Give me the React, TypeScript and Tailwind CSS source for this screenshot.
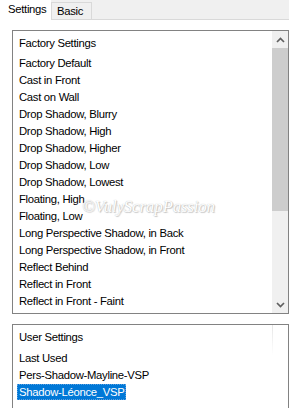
import React from "react";

const factory = [
  "Factory Default",
  "Cast in Front",
  "Cast on Wall",
  "Drop Shadow, Blurry",
  "Drop Shadow, High",
  "Drop Shadow, Higher",
  "Drop Shadow, Low",
  "Drop Shadow, Lowest",
  "Floating, High",
  "Floating, Low",
  "Long Perspective Shadow, in Back",
  "Long Perspective Shadow, in Front",
  "Reflect Behind",
  "Reflect in Front",
  "Reflect in Front - Faint",
];

const user = ["Last Used", "Pers-Shadow-Mayline-VSP", "Shadow-Léonce_VSP"];

function Chevron({ up }: { up?: boolean }) {
  return (
    <svg width="9" height="6" viewBox="0 0 9 6">
      <polyline
        points={up ? "1,5 4.5,1.5 8,5" : "1,1 4.5,4.5 8,1"}
        fill="none"
        stroke="#606060"
        strokeWidth="1.7"
      />
    </svg>
  );
}

export default function App() {
  return (
    <div className="relative w-[289px] h-[408px] overflow-hidden bg-white text-[11.3px] tracking-[-0.3px] text-black font-['Liberation_Sans',Arial,sans-serif]">
      {/* Tabs */}
      <div className="flex h-[20px] items-end border-b border-[#d9d9d9] bg-[#f0f0f0]">
        <div className="relative z-10 -mb-px flex h-[21px] w-[51px] items-center bg-white pl-[8px] pb-[1px]">
          Settings
        </div>
        <div className="flex h-[17px] w-[41px] items-center border border-b-0 border-[#d9d9d9] bg-[#f0f0f0] pl-[5px] pt-[1px]">
          Basic
        </div>
      </div>

      {/* Factory list */}
      <div className="ml-[12px] mt-[10px] flex h-[284px] w-[277px] border border-[#828282]">
        <div className="flex-1 pl-[6px] pt-[4px] leading-[17px]">
          <div className="mb-[3px]">Factory Settings</div>
          {factory.map((f) => (
            <div key={f} className="whitespace-nowrap">
              {f}
            </div>
          ))}
        </div>
        <div className="flex w-[16px] flex-col bg-[#f0f0f0]">
          <div className="flex h-[17px] items-center justify-center">
            <Chevron up />
          </div>
          <div className="h-[163px] bg-[#cdcdcd]" />
          <div className="flex-1" />
          <div className="flex h-[17px] items-center justify-center">
            <Chevron />
          </div>
        </div>
      </div>

      {/* User list */}
      <div className="ml-[12px] mt-[10px] flex h-[100px] w-[277px] border border-[#828282]">
        <div className="flex-1 pl-[4px] pt-[4px] leading-[17px]">
          <div className="mb-[4px] pl-[2px]">User Settings</div>
          {user.map((u, i) =>
            i === 2 ? (
              <div key={u}>
                <span className="inline-block h-[16px] bg-[#0078d7] px-[2px] leading-[16px] text-white outline outline-1 outline-dotted outline-[#5aa0e0] -outline-offset-1">
                  {u}
                </span>
              </div>
            ) : (
              <div key={u} className="pl-[2px]">
                {u}
              </div>
            )
          )}
        </div>
        <div className="w-[16px]">
          <div className="h-[30px] w-px bg-gradient-to-b from-[#e6e6e6] to-transparent" />
        </div>
      </div>

      {/* Watermark */}
      <div className="pointer-events-none absolute left-[82px] top-[194px] font-['Liberation_Serif',serif] text-[17px] italic tracking-[-0.2px] text-white [text-shadow:0_0_1px_#b0b0b0,1px_1px_1px_#c8c8c8]">
        ©VulyScrapPassion
      </div>
    </div>
  );
}
